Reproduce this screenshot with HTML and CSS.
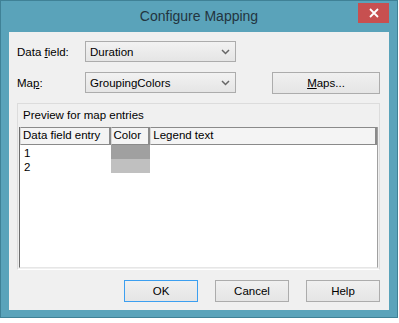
FILE: index.html
```html
<!DOCTYPE html>
<html lang="en">
<head>
    <meta charset="UTF-8">
    <title>Configure Mapping</title>
    <link rel="stylesheet" href="styles.css">
</head>
<body>

    <div class="window">
        <div class="titlebar">
            <span class="title">Configure Mapping</span>
            <button type="button" class="close-btn">
                <svg width="10" height="10" viewBox="0 0 10 10"><path d="M1 1 L9 9 M9 1 L1 9" stroke="#fff" stroke-width="1.8"/></svg>
            </button>
        </div>

        <div class="client">
            <div class="field-row">
                <label class="field-label">Data <u>f</u>ield:</label>
                <div class="combo">
                    <span>Duration</span>
                    <svg class="chevron" width="9" height="6" viewBox="0 0 9 6"><path d="M1 1 L4.5 4.5 L8 1" stroke="#666" stroke-width="1.5" fill="none"/></svg>
                </div>
            </div>

            <div class="field-row">
                <label class="field-label">Ma<u>p</u>:</label>
                <div class="combo">
                    <span>GroupingColors</span>
                    <svg class="chevron" width="9" height="6" viewBox="0 0 9 6"><path d="M1 1 L4.5 4.5 L8 1" stroke="#666" stroke-width="1.5" fill="none"/></svg>
                </div>
                <button type="button" class="btn maps-btn"><u>M</u>aps...</button>
            </div>

            <div class="preview">
                <div class="preview-caption">Preview for map entries</div>
                <div class="listview">
                    <div class="lv-header">
                        <div class="col col-entry">Data field entry</div>
                        <div class="col col-color">Color</div>
                        <div class="col col-legend">Legend text</div>
                    </div>
                    <div class="lv-row">
                        <div class="cell col-entry">1</div>
                        <div class="cell col-color" style="background: #a0a0a0;"></div>
                        <div class="cell col-legend"></div>
                    </div>
                    <div class="lv-row">
                        <div class="cell col-entry">2</div>
                        <div class="cell col-color" style="background: #c0c0c0;"></div>
                        <div class="cell col-legend"></div>
                    </div>
                </div>
            </div>

            <div class="button-row">
                <button type="button" class="btn default-btn">OK</button>
                <button type="button" class="btn">Cancel</button>
                <button type="button" class="btn">Help</button>
            </div>
        </div>
    </div>

</body>
</html>
```

FILE: styles.css
```css
body {
    margin: 0;
    background: #ffffff;
    font-family: "Liberation Sans", Arial, sans-serif;
    font-size: 11.5px;
    color: #000;
}

/* Window frame */
.window {
    width: 380px;
    height: 278px;
    padding: 31px 8px 7px 8px;
    background: #5aa3ba;
    border: 1px solid #3f8196;
    position: relative;
}

.titlebar {
    position: absolute;
    top: 0;
    left: 0;
    right: 0;
    height: 31px;
    display: flex;
    justify-content: center;
    align-items: center;
}

.title {
    font-size: 14px;
    color: #233540;
    margin-top: -1px;
}

.close-btn {
    position: absolute;
    top: 2px;
    right: 8px;
    width: 31px;
    height: 20px;
    border: none;
    padding: 0;
    background: #c75050;
    display: flex;
    justify-content: center;
    align-items: center;
}

/* Client area */
.client {
    width: 380px;
    height: 278px;
    background: #f0f0f0;
    box-sizing: border-box;
    padding: 9px 9px 0 8px;
    display: flex;
    flex-direction: column;
}

.field-row {
    display: flex;
    align-items: center;
    height: 21px;
    margin-bottom: 10px;
}

.field-label {
    width: 68px;
}

.combo {
    width: 151px;
    height: 21px;
    box-sizing: border-box;
    border: 1px solid #acacac;
    background: linear-gradient(#f2f2f2, #e5e5e5);
    display: flex;
    align-items: center;
    justify-content: space-between;
    padding: 0 5px 0 4px;
}

.chevron {
    margin-top: 1px;
}

.btn {
    width: 74px;
    height: 22px;
    box-sizing: border-box;
    border: 1px solid #acacac;
    background: linear-gradient(#f0f0f0, #e5e5e5);
    font-family: inherit;
    font-size: 11.5px;
    color: #000;
    padding: 0;
}

.maps-btn {
    width: 108px;
    margin-left: 36px;
}

.default-btn {
    border-color: #3c9ff0;
}

/* Preview panel */
.preview {
    width: 363px;
    height: 167px;
    box-sizing: border-box;
    border: 1px solid #dcdcdc;
    border-bottom-color: #ffffff;
    padding: 0 1px;
    display: flex;
    flex-direction: column;
}

.preview-caption {
    height: 23px;
    line-height: 23px;
    padding-left: 4px;
}

.listview {
    flex: 1;
    background: #ffffff;
    border: 1px solid #a0a0a0;
    border-left-color: #6d6d6d;
    border-top: none;
    border-bottom-color: #e6e6e6;
    margin-bottom: 1px;
}

.lv-header {
    display: flex;
    height: 18px;
    background: #f4f4f4;
}

.lv-header .col {
    box-sizing: border-box;
    border: 1px solid #8a8a8a;
    border-right-width: 2px;
    border-left-color: #d8d8d8;
    line-height: 15px;
    padding-left: 2px;
}

.col-entry {
    width: 91px;
}

.col-color {
    width: 40px;
}

.col-legend {
    width: 228px;
}

.lv-row {
    display: flex;
    height: 14px;
}

.cell {
    line-height: 16px;
    padding-left: 4px;
    box-sizing: border-box;
}

/* Bottom buttons */
.button-row {
    display: flex;
    justify-content: flex-end;
    gap: 17px;
    margin-top: 10px;
}
```
